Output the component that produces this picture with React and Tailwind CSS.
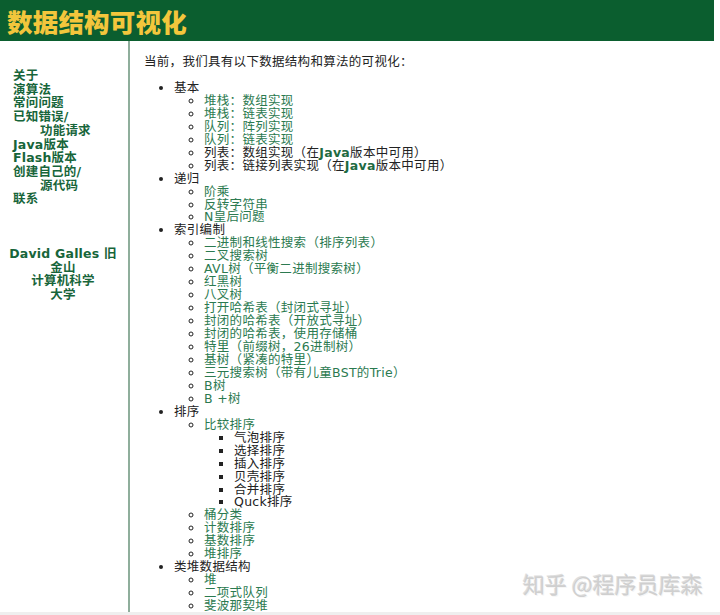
import React from "react";

const sideLinks = [
  { t: "关于" },
  { t: "演算法" },
  { t: "常问问题" },
  { t: "已知错误/" },
  { t: "功能请求", indent: true },
  { t: "Java版本" },
  { t: "Flash版本" },
  { t: "创建自己的/" },
  { t: "源代码", indent: true },
  { t: "联系" },
];

const sections = [
  {
    title: "基本",
    items: [
      { t: "堆栈：数组实现", link: true },
      { t: "堆栈：链表实现", link: true },
      { t: "队列：阵列实现", link: true },
      { t: "队列：链表实现", link: true },
      { t: "列表：数组实现（在", java: true, after: "版本中可用）" },
      { t: "列表：链接列表实现（在", java: true, after: "版本中可用）" },
    ],
  },
  {
    title: "递归",
    items: [
      { t: "阶乘", link: true },
      { t: "反转字符串", link: true },
      { t: "N皇后问题", link: true },
    ],
  },
  {
    title: "索引编制",
    items: [
      { t: "二进制和线性搜索（排序列表）", link: true },
      { t: "二叉搜索树", link: true },
      { t: "AVL树（平衡二进制搜索树）", link: true },
      { t: "红黑树", link: true },
      { t: "八叉树", link: true },
      { t: "打开哈希表（封闭式寻址）", link: true },
      { t: "封闭的哈希表（开放式寻址）", link: true },
      { t: "封闭的哈希表，使用存储桶", link: true },
      { t: "特里（前缀树，26进制树）", link: true },
      { t: "基树（紧凑的特里）", link: true },
      { t: "三元搜索树（带有儿童BST的Trie）", link: true },
      { t: "B树", link: true },
      { t: "B +树", link: true },
    ],
  },
  {
    title: "排序",
    items: [
      {
        t: "比较排序",
        link: true,
        sub: ["气泡排序", "选择排序", "插入排序", "贝壳排序", "合并排序", "Quck排序"],
      },
      { t: "桶分类", link: true },
      { t: "计数排序", link: true },
      { t: "基数排序", link: true },
      { t: "堆排序", link: true },
    ],
  },
  {
    title: "类堆数据结构",
    items: [
      { t: "堆", link: true },
      { t: "二项式队列", link: true },
      { t: "斐波那契堆", link: true },
      { t: "左派堆", link: true },
    ],
  },
];

export default function App() {
  return (
    <div
      className="relative h-[615px] w-[720px] overflow-hidden bg-white text-[12.5px] text-[#222]"
      style={{ fontFamily: '"DejaVu Sans", "Noto Sans CJK SC", sans-serif' }}
    >
      {/* Header */}
      <div className="flex h-[41px] w-[714px] items-center bg-[#0b5e2f] pl-[7px]">
        <h1
          className="text-[25.5px] font-black leading-none tracking-[0.2px] text-[#f3c63c]"
          style={{ fontFamily: '"Noto Sans CJK SC", sans-serif' }}
        >
          数据结构可视化
        </h1>
      </div>

      <div className="flex h-[574px]">
        {/* Sidebar */}
        <div className="w-[130px] shrink-0 border-r-2 border-[#8fae9c] pt-[28px] font-bold leading-[13.7px] tracking-[0.2px] text-[#17653a]">
          <div className="pl-[13px]">
            {sideLinks.map((l) => (
              <div key={l.t} className={l.indent ? "pl-[27px]" : ""}>
                {l.t}
              </div>
            ))}
          </div>
          <div className="mt-[41px] pr-[2px] text-center">
            David Galles 旧
            <br />
            金山
            <br />
            计算机科学
            <br />
            大学
          </div>
        </div>

        {/* Main */}
        <div className="flex-1 pl-[14px] pt-[15px] leading-[12.95px] tracking-[0.3px]">
          <p>当前，我们具有以下数据结构和算法的可视化：</p>
          <ul className="mt-[13px] list-disc pl-[30px]">
            {sections.map((s) => (
              <li key={s.title}>
                {s.title}
                <ul className="list-[circle] pl-[30px]">
                  {s.items.map((it) => (
                    <li key={it.t}>
                      {it.java ? (
                        <>
                          {it.t}
                          <span className="font-bold text-[#1f6b42]">Java</span>
                          {it.after}
                        </>
                      ) : (
                        <span className={it.link ? "text-[#2b7a50]" : ""}>{it.t}</span>
                      )}
                      {it.sub && (
                        <ul className="list-[square] pl-[30px]">
                          {it.sub.map((x) => (
                            <li key={x}>{x}</li>
                          ))}
                        </ul>
                      )}
                    </li>
                  ))}
                </ul>
              </li>
            ))}
          </ul>
        </div>
      </div>

      {/* Watermark */}
      <div
        className="absolute left-[523px] top-[570px] text-[22px] leading-[26px] text-[#cfcfcf]"
        style={{ fontFamily: '"Noto Sans CJK SC", sans-serif', textShadow: "1px 1px 0 #f6f6f6, -1px -1px 0 #dedede" }}
      >
        知乎 @程序员库森
      </div>
      <div className="absolute bottom-0 left-0 h-[3px] w-full bg-[#efefef]" />
    </div>
  );
}
